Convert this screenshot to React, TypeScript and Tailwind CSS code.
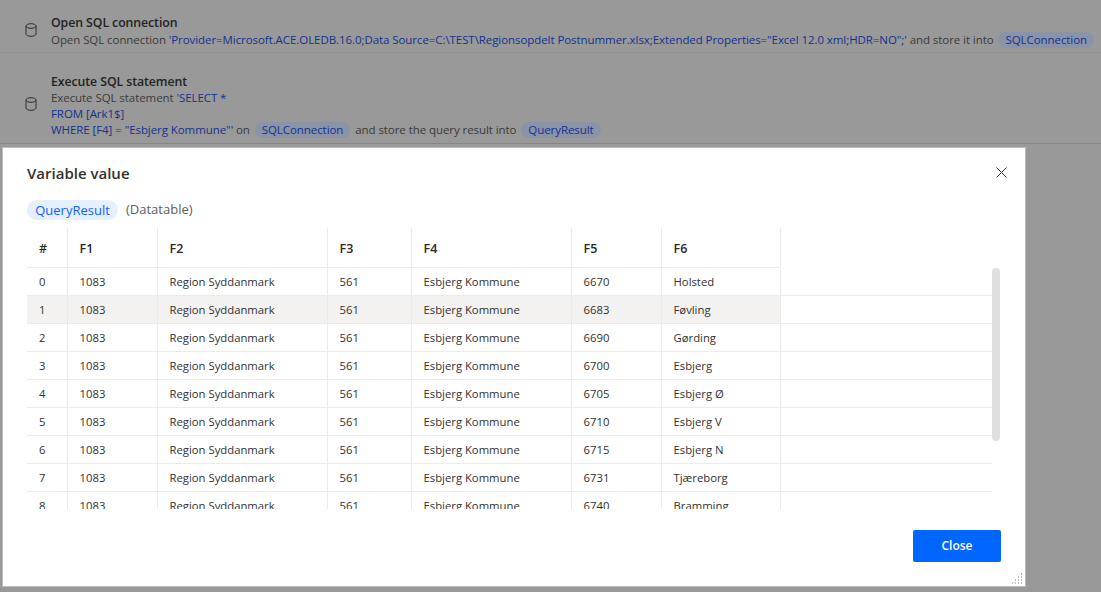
const font = "font-['Open_Sans','Noto_Sans',sans-serif]"

const rows = [
  ['0', '6670', 'Holsted'],
  ['1', '6683', 'Føvling'],
  ['2', '6690', 'Gørding'],
  ['3', '6700', 'Esbjerg'],
  ['4', '6705', 'Esbjerg Ø'],
  ['5', '6710', 'Esbjerg V'],
  ['6', '6715', 'Esbjerg N'],
  ['7', '6731', 'Tjæreborg'],
  ['8', '6740', 'Bramming'],
]

function DbIcon() {
  return (
    <svg className="w-[12px] h-[14px] shrink-0" viewBox="0 0 12 14" fill="none" stroke="#2e2e2e" strokeWidth={1}>
      <path d="M1 3c0-1.3 2.2-2.3 5-2.3s5 1 5 2.3-2.2 2.3-5 2.3S1 4.300 1 3z" />
      <path d="M1 3v8c0 1.300 2.200 2.300 5 2.300s5-1 5-2.300V3" />
    </svg>
  )
}

function Pill({ children }: { children: string }) {
  return (
    <span className="inline-block mx-[2px] px-[7px] h-[16px] leading-[15px] rounded-full bg-[#8a93a8] text-[#14318f]">
      {children}
    </span>
  )
}

function Cell({ w, children, first = false }: { w: string; children: string; first?: boolean }) {
  return <div className={`${w} shrink-0 ${first ? 'pl-[12px]' : 'pl-[11.5px]'} border-r border-[#edebe9]`}>{children}</div>
}

export default function App() {
  return (
    <div className={`${font} w-[1101px] h-[592px] overflow-hidden bg-[#999999] text-[11.5px] tracking-[-0.07px] text-[#2f2f2f]`}>
      <div className="h-[53px] pt-[14px] pl-[25px] flex border-b border-[#8f8f8f]">
        <div className="pt-[9px] w-[26px] shrink-0"><DbIcon /></div>
        <div className="min-w-0">
          <div className="text-[12.3px] font-semibold leading-[17px] text-[#222222]">Open SQL connection</div>
          <div className="mt-px leading-[16px] whitespace-nowrap text-[#3a3a3a]">
            Open SQL connection <span className="text-[#14318f]">'Provider=Microsoft.ACE.OLEDB.16.0;Data Source=C:\TEST\Regionsopdelt Postnummer.xlsx;Extended Properties="Excel 12.0 xml;HDR=NO";'</span> and store it into <Pill>SQLConnection</Pill>
          </div>
        </div>
      </div>
      <div className="h-[91px] pt-[20px] pl-[25px] flex border-b border-[#858585]">
        <div className="pt-[24px] w-[26px] shrink-0"><DbIcon /></div>
        <div className="min-w-0">
          <div className="text-[12.3px] font-semibold leading-[17px] text-[#222222]">Execute SQL statement</div>
          <div className="leading-[16px] whitespace-nowrap text-[#3a3a3a]">
            Execute SQL statement <span className="text-[#14318f]">'SELECT *</span>
          </div>
          <div className="leading-[16px] text-[#14318f]">FROM [Ark1$]</div>
          <div className="leading-[16px] whitespace-nowrap text-[#3a3a3a]">
            <span className="text-[#14318f]">WHERE [F4] = "Esbjerg Kommune"'</span> on <Pill>SQLConnection</Pill> and store the query result into <Pill>QueryResult</Pill>
          </div>
        </div>
      </div>

      <div className="mt-[3px] ml-[2px] w-[1024px] h-[440px] bg-white border border-[#bdbdbd] flex flex-col relative tracking-normal">
        <div className="h-[50px] pl-[24px] pr-[18px] flex items-center justify-between">
          <div className="text-[15px] font-semibold text-[#323130]">Variable value</div>
          <svg className="w-[11px] h-[11px] -mt-[2px]" viewBox="0 0 11 11" stroke="#323130" strokeWidth={1}>
            <path d="M.5.5l10 10M10.5.5l-10 10" />
          </svg>
        </div>
        <div className="mt-[2px] h-[20px] pl-[24px] flex items-center text-[13px]">
          <span className="h-[20px] w-[91px] leading-[20px] text-center rounded-full bg-[#e5f0ff] text-[#0f62fe]">QueryResult</span>
          <span className="ml-[8px] text-[#605e5c]">(Datatable)</span>
        </div>
        <div className="relative mt-[8px] ml-[24px] w-[973px] h-[281px] overflow-hidden text-[11.3px] text-[#323130]">
          <div className="flex h-[40px] leading-[41px] w-[753px] font-semibold text-[12.5px] text-[#292827] border-b border-[#edebe9]">
            <Cell w="w-[41px]" first>#</Cell>
            <Cell w="w-[90px]">F1</Cell>
            <Cell w="w-[170px]">F2</Cell>
            <Cell w="w-[84px]">F3</Cell>
            <Cell w="w-[160px]">F4</Cell>
            <Cell w="w-[90px]">F5</Cell>
            <Cell w="w-[119px]">F6</Cell>
          </div>
          {rows.map(r => (
            <div key={r[0]} className="w-[965px] h-[28px] border-b border-[#edebe9]">
              <div className={`flex h-[27px] leading-[27px] w-[753px] ${r[0] === '1' ? 'bg-[#f3f2f1]' : ''}`}>
                <Cell w="w-[41px]" first>{r[0]}</Cell>
                <Cell w="w-[90px]">1083</Cell>
                <Cell w="w-[170px]">Region Syddanmark</Cell>
                <Cell w="w-[84px]">561</Cell>
                <Cell w="w-[160px]">Esbjerg Kommune</Cell>
                <Cell w="w-[90px]">{r[1]}</Cell>
                <Cell w="w-[119px]">{r[2]}</Cell>
              </div>
            </div>
          ))}
          <div className="absolute left-[965px] top-[40px] w-[8px] h-[173px] rounded-[4px] bg-[#e1dfdd]" />
        </div>
        <div className="flex justify-end pr-[24px] pt-[21px]">
          <button className="w-[88px] h-[32px] rounded-[2px] bg-[#0066ff] text-white text-[12px] font-semibold">Close</button>
        </div>
        <svg className="absolute right-[1px] bottom-[1px] w-[13px] h-[13px]" viewBox="0 0 13 13" fill="#b4bac6">
          <rect x="10" y="1" width="1" height="2" />
          <rect x="7" y="4" width="1" height="2" />
          <rect x="10" y="4" width="1" height="2" />
          <rect x="4" y="7" width="1" height="2" />
          <rect x="7" y="7" width="1" height="2" />
          <rect x="10" y="7" width="1" height="2" />
          <rect x="1" y="10" width="1" height="2" />
          <rect x="4" y="10" width="1" height="2" />
          <rect x="7" y="10" width="1" height="2" />
          <rect x="10" y="10" width="1" height="2" />
        </svg>
      </div>
    </div>
  )
}
